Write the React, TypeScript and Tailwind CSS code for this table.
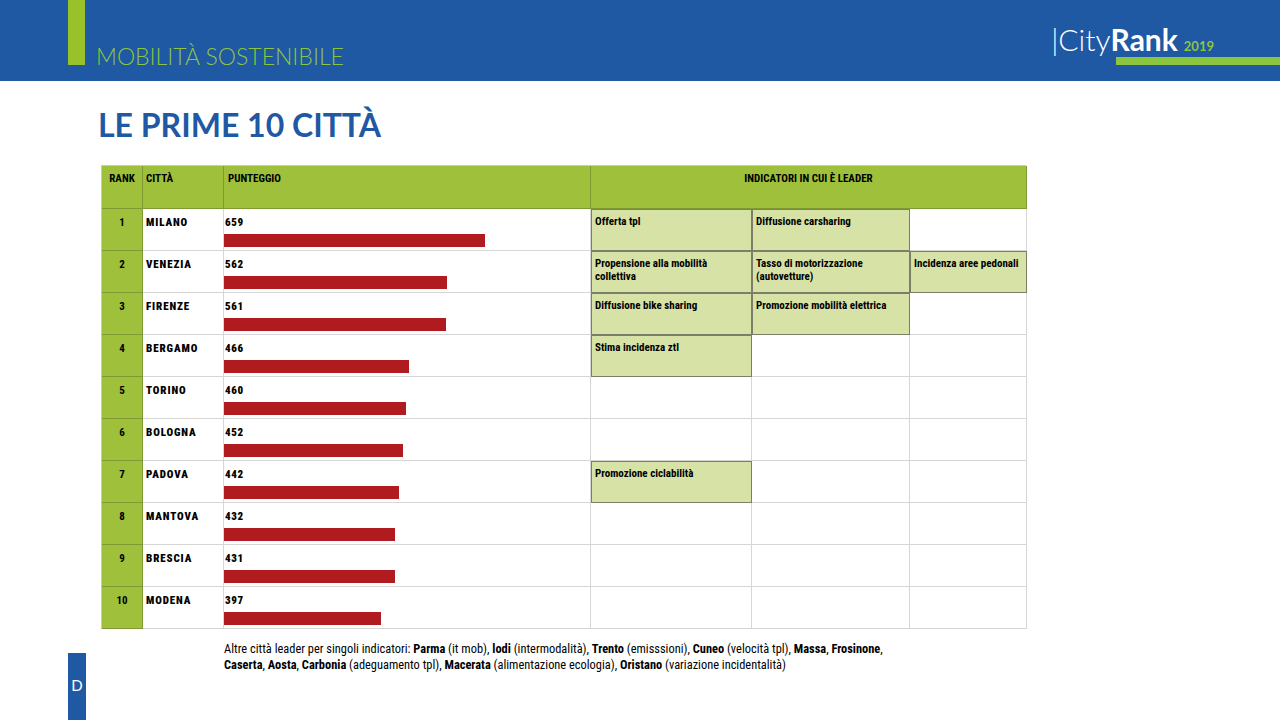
import React from "react";

type Row = {
  rank: number;
  city: string;
  score: number;
  leader: string[];
};

const rows: Row[] = [
  { rank: 1, city: "MILANO", score: 659, leader: ["Offerta tpl", "Diffusione carsharing", ""] },
  {
    rank: 2,
    city: "VENEZIA",
    score: 562,
    leader: ["Propensione alla mobilità collettiva", "Tasso di motorizzazione (autovetture)", "Incidenza aree pedonali"],
  },
  { rank: 3, city: "FIRENZE", score: 561, leader: ["Diffusione bike sharing", "Promozione mobilità elettrica", ""] },
  { rank: 4, city: "BERGAMO", score: 466, leader: ["Stima incidenza ztl", "", ""] },
  { rank: 5, city: "TORINO", score: 460, leader: ["", "", ""] },
  { rank: 6, city: "BOLOGNA", score: 452, leader: ["", "", ""] },
  { rank: 7, city: "PADOVA", score: 442, leader: ["Promozione ciclabilità", "", ""] },
  { rank: 8, city: "MANTOVA", score: 432, leader: ["", "", ""] },
  { rank: 9, city: "BRESCIA", score: 431, leader: ["", "", ""] },
  { rank: 10, city: "MODENA", score: 397, leader: ["", "", ""] },
];

const narrow = { fontFamily: '"Liberation Sans Narrow", "Roboto Condensed", Roboto, sans-serif' };

export default function App() {
  return (
    <div className="relative h-[720px] w-[1280px] overflow-hidden bg-white" style={{ fontFamily: "Lato, sans-serif" }}>
      {/* top band */}
      <div className="flex h-[81px] bg-[#1f58a3]">
        <div className="ml-[68px] h-[65px] w-[17px] bg-[#98c12a]" />
        <div className="ml-[11px] mt-[45px] text-[23px] font-light leading-none text-[#8cc63f]">
          MOBILITÀ SOSTENIBILE
        </div>
        <div className="ml-auto flex flex-col items-end pt-[24px]">
          <div className="mr-[66px] flex items-baseline text-white">
            <span className="text-[30px] font-light leading-none">|City</span>
            <span className="text-[30px] font-bold leading-none">Rank</span>
            <span className="ml-[6px] text-[13px] font-bold leading-none text-[#8cc63f]">2019</span>
          </div>
          <div className="mt-[3px] h-[8px] w-[164px] bg-[#8cc63f]" />
        </div>
      </div>

      <h1 className="ml-[98px] mt-[28px] text-[32px] font-bold leading-none text-[#1f58a3]">
        LE PRIME 10 CITTÀ
      </h1>

      {/* table */}
      <div
        className="ml-[101px] mt-[24px] grid w-[925px] grid-cols-[41px_81px_367px_161px_158px_117px] grid-rows-[43px_repeat(10,42px)] border-l border-t border-[#c9c9c9] text-[11px] text-black"
        style={narrow}
      >
        <div className="border-b border-r border-[#7f9a35] bg-[#9fc03a] pt-[5px] text-center font-bold">RANK</div>
        <div className="border-b border-r border-[#7f9a35] bg-[#9fc03a] pl-[3px] pt-[5px] font-bold">CITTÀ</div>
        <div className="border-b border-r border-[#7f9a35] bg-[#9fc03a] pl-[4px] pt-[5px] font-bold">PUNTEGGIO</div>
        <div className="col-span-3 border-b border-r border-[#7f9a35] bg-[#9fc03a] pt-[5px] text-center font-bold">
          INDICATORI IN CUI È LEADER
        </div>

        {rows.map((r) => (
          <React.Fragment key={r.rank}>
            <div className="border-b border-r border-[#7f9a35] bg-[#9fc03a] pt-[6px] text-center font-bold">{r.rank}</div>
            <div className="border-b border-r border-[#d6d6d6] pl-[3px] pt-[6px] font-black tracking-[0.08em]">{r.city}</div>
            <div className="flex flex-col border-b border-r border-[#d6d6d6] pt-[6px]">
              <span className="pl-[1px] font-black tracking-[0.06em]">{r.score}</span>
              <div className="mt-[2px] h-[13px] bg-[#b01b20]" style={{ width: Math.round(r.score * 0.3965) }} />
            </div>
            {r.leader.map((t, i) =>
              t ? (
                <div
                  key={i}
                  className="border-b border-r border-[#7d7d6a] bg-[#d7e3a6] px-[4px] pt-[6px] font-bold leading-[13px] shadow-[inset_1px_1px_0_#7d7d6a]"
                >
                  {t}
                </div>
              ) : (
                <div key={i} className="border-b border-r border-[#d6d6d6]" />
              )
            )}
          </React.Fragment>
        ))}
      </div>

      <p className="ml-[224px] mt-[12px] w-[680px] text-[12.4px] leading-[16px] text-black" style={narrow}>
        Altre città leader per singoli indicatori: <b>Parma</b> (it mob), <b>lodi</b> (intermodalità), <b>Trento</b> (emisssioni),{" "}
        <b>Cuneo</b> (velocità tpl), <b>Massa</b>, <b>Frosinone</b>, <b>Caserta</b>, <b>Aosta</b>, <b>Carbonia</b> (adeguamento tpl),{" "}
        <b>Macerata</b> (alimentazione ecologia), <b>Oristano</b> (variazione incidentalità)
      </p>

      <div className="absolute bottom-0 left-[68px] flex h-[67px] w-[18px] items-center justify-center bg-[#1f58a3] pb-[2px] text-[15px] text-white">
        D
      </div>
    </div>
  );
}
